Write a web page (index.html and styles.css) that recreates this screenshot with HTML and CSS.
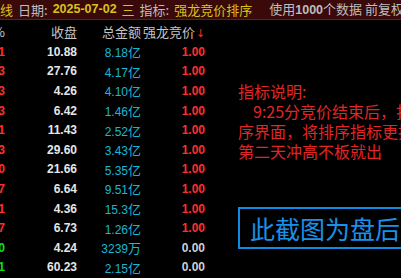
FILE: index.html
```html
<!DOCTYPE html>
<html lang="zh">
<head>
    <meta charset="UTF-8">
    <title>强龙竞价排序</title>
    <link rel="stylesheet" href="styles.css">
</head>
<body>
    <div class="topbar">
        <span class="yel">线</span>
        <span class="gray">日期:</span>
        <span class="yel num">2025-07-02</span>
        <span class="yel">三</span>
        <span class="gray">指标:</span>
        <span class="yel">强龙竞价排序</span>
        <span class="gray wide">使用<b>1000</b>个数据 前复权</span>
    </div>

    <div class="main">
        <div class="table">
            <div class="row head">
                <div class="c-pct"><span>涨幅%</span></div>
                <div class="c-close">收盘</div>
                <div class="c-amt">总金额</div>
                <div class="c-rank">强龙竞价<span class="arrow">↓</span></div>
            </div>
            <div class="row"><div class="c-pct red"><span>10.01</span></div><div class="c-close">10.88</div><div class="c-amt">8.18<i>亿</i></div><div class="c-rank red">1.00</div></div>
            <div class="row"><div class="c-pct red"><span>9.93</span></div><div class="c-close">27.76</div><div class="c-amt">4.17<i>亿</i></div><div class="c-rank red">1.00</div></div>
            <div class="row"><div class="c-pct red"><span>10.03</span></div><div class="c-close">4.26</div><div class="c-amt">4.10<i>亿</i></div><div class="c-rank red">1.00</div></div>
            <div class="row"><div class="c-pct red"><span>10.03</span></div><div class="c-close">6.42</div><div class="c-amt">1.46<i>亿</i></div><div class="c-rank red">1.00</div></div>
            <div class="row"><div class="c-pct red"><span>10.01</span></div><div class="c-close">11.43</div><div class="c-amt">2.52<i>亿</i></div><div class="c-rank red">1.00</div></div>
            <div class="row"><div class="c-pct red"><span>10.03</span></div><div class="c-close">29.60</div><div class="c-amt">3.43<i>亿</i></div><div class="c-rank red">1.00</div></div>
            <div class="row"><div class="c-pct red"><span>10.00</span></div><div class="c-close">21.66</div><div class="c-amt">5.35<i>亿</i></div><div class="c-rank red">1.00</div></div>
            <div class="row"><div class="c-pct red"><span>9.97</span></div><div class="c-close">6.64</div><div class="c-amt">9.51<i>亿</i></div><div class="c-rank red">1.00</div></div>
            <div class="row"><div class="c-pct red"><span>10.01</span></div><div class="c-close">4.36</div><div class="c-amt">15.3<i>亿</i></div><div class="c-rank red">1.00</div></div>
            <div class="row"><div class="c-pct red"><span>9.97</span></div><div class="c-close">6.73</div><div class="c-amt">1.26<i>亿</i></div><div class="c-rank red">1.00</div></div>
            <div class="row"><div class="c-pct green"><span>-1.40</span></div><div class="c-close">4.24</div><div class="c-amt">3239<i>万</i></div><div class="c-rank gray">0.00</div></div>
            <div class="row"><div class="c-pct green"><span>-2.71</span></div><div class="c-close">60.23</div><div class="c-amt">2.15<i>亿</i></div><div class="c-rank gray">0.00</div></div>
        </div>

        <div class="notes">
            <p class="note-title">指标说明:</p>
            <p class="indent">9:25分竞价结束后，打开排</p>
            <p>序界面，将排序指标更换</p>
            <p>第二天冲高不板就出</p>
            <div class="stamp">此截图为盘后</div>
        </div>
    </div>
</body>
</html>
```

FILE: styles.css
```css
body {
    margin: 0;
    width: 401px;
    height: 278px;
    overflow: hidden;
    background-color: #000;
    font-family: "Noto Sans CJK SC", "Liberation Sans", sans-serif;
}
.topbar {
    height: 19px;
    background-color: #3a0a0a;
    border-bottom: 1px solid #8a0c0c;
    display: flex;
    align-items: center;
    gap: 5px;
    font-size: 13px;
    white-space: nowrap;
    overflow: hidden;
    line-height: 19px;
}
.topbar .num {
    font-family: "Liberation Sans", sans-serif;
    font-weight: bold;
    font-size: 12.5px;
}
.topbar b {
    font-family: "Liberation Sans", sans-serif;
    font-size: 12.5px;
}
.topbar .wide {
    margin-left: 12px;
}
.yel {
    color: #d8c21c;
}
.gray {
    color: #bdbdbd;
}
.main {
    display: flex;
}
.table {
    width: 208px;
    flex-shrink: 0;
}
.row {
    display: grid;
    grid-template-columns: 5px 72px 64px 67px;
    height: 19.6px;
    align-items: center;
    font-family: "Liberation Sans", sans-serif;
    font-weight: bold;
    font-size: 12px;
    color: #e6e6e6;
    white-space: nowrap;
}
.row.head {
    height: 22px;
    font-family: "Noto Sans CJK SC", sans-serif;
    font-weight: normal;
    font-size: 13px;
    color: #c4c4c4;
}
.c-pct {
    display: flex;
    justify-content: flex-end;
    overflow: hidden;
}
.c-close, .c-amt {
    text-align: right;
}
.c-amt {
    color: #1cb6d4;
    font-weight: normal;
}
.c-amt i {
    font-style: normal;
    font-family: "Noto Sans CJK SC", sans-serif;
    font-size: 13px;
}
.head .c-amt {
    color: #c4c4c4;
}
.c-rank {
    text-align: right;
    padding-right: 3px;
}
.head .c-rank {
    text-align: left;
    padding-left: 2px;
}
.arrow {
    color: #ff2a2a;
    font-family: "DejaVu Sans", sans-serif;
    font-size: 11px;
    margin-left: 1px;
}
.red {
    color: #ff2e2e;
}
.green {
    color: #10e010;
}
.c-rank.gray {
    color: #cfcfcf;
}
.notes {
    flex: 1;
    padding-top: 61px;
    padding-left: 30px;
    color: #e02626;
    font-size: 16px;
    line-height: 20px;
    white-space: nowrap;
    overflow: hidden;
}
.notes p {
    margin: 0;
}
.notes .indent {
    padding-left: 15px;
}
.stamp {
    margin-top: 46px;
    width: 200px;
    height: 38px;
    border: 2px solid #0c8ce4;
    color: #1a90ea;
    font-size: 25px;
    line-height: 38px;
    padding-left: 10px;
}
```
